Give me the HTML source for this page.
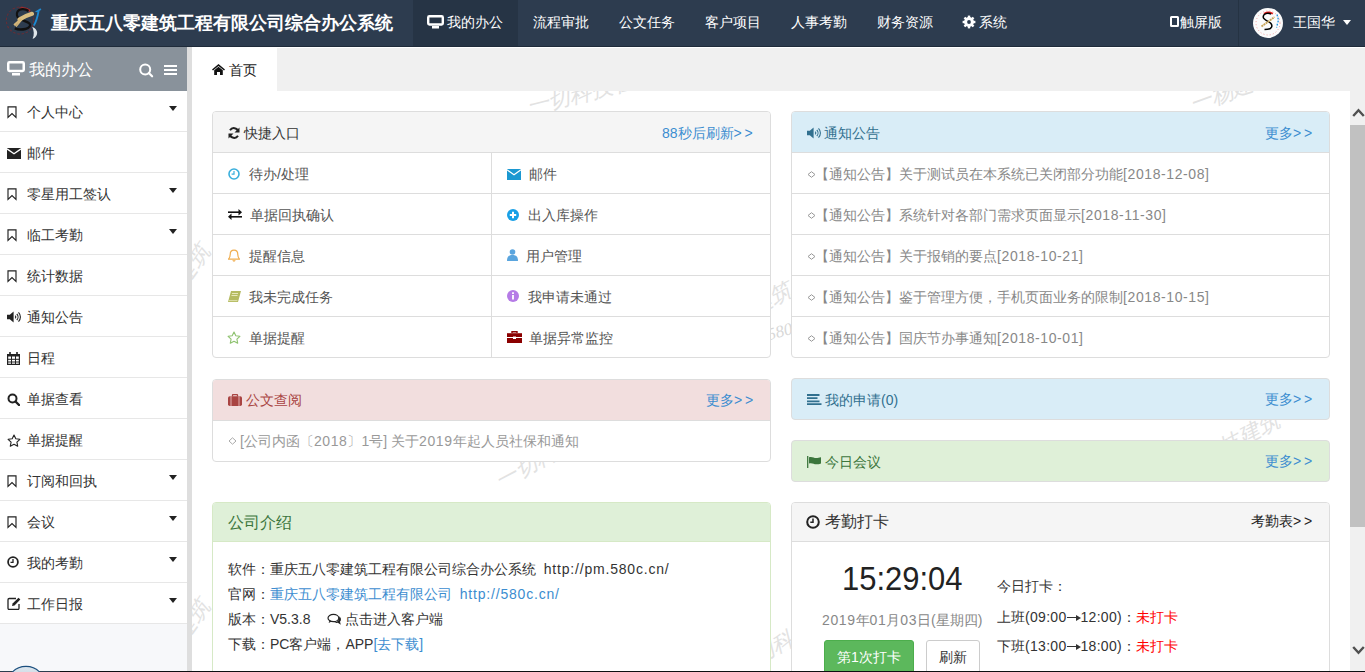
<!DOCTYPE html>
<html><head><meta charset="utf-8">
<style>
*{box-sizing:border-box;margin:0;padding:0}
html,body{width:1365px;height:672px;overflow:hidden;background:#fff;font-family:"Liberation Sans",sans-serif;font-size:14px;color:#333}
.a{position:absolute;white-space:nowrap}
svg{position:absolute;display:block}
.box{position:absolute;box-sizing:border-box}
.pn{position:absolute;border:1px solid #ddd;border-radius:4px;background:#fff;overflow:hidden}
.hl{position:absolute;height:1px;background:#ddd}
.vl{position:absolute;width:1px;background:#ddd}
.t14{font-size:14px;line-height:20px}
.g{color:#555}
.lk{color:#3c8dd0}
.n{letter-spacing:.6px}
.arr{display:inline-block;position:relative;width:14px;height:10px}
.arr i{position:absolute;left:0;top:5px;width:12px;height:1px;background:#333}
.arr b{position:absolute;left:9px;top:2.5px;width:0;height:0;border-top:3px solid transparent;border-bottom:3px solid transparent;border-left:5px solid #333}
</style></head>
<body>
<!-- top nav -->
<div class="box" style="left:0;top:0;width:1365px;height:47px;background:#2d3c4f"></div>
<div class="box" style="left:0;top:46px;width:1365px;height:1px;background:#1f2b3a"></div>
<!-- logo -->
<svg style="left:0;top:0" width="46" height="46" viewBox="0 0 46 46">
  <circle cx="20" cy="20.5" r="13.6" fill="none" stroke="#8e2424" stroke-width="1.1" stroke-dasharray="2.5 1.8" opacity=".6"/>
  <path d="M19.5 8.8C23 8 27 8.6 30 10.8" fill="none" stroke="#c42a2a" stroke-width="2.2"/>
  <path d="M28.5 11C25.5 8.5 19.5 8.5 17.6 11.5 16.2 14 17 17 19 18.5 22 20.5 27 21 29.5 23.5 31 25.5 29.5 28.2 25.5 29 21.5 29.8 17.5 29.5 14.8 28.4" fill="none" stroke="#111" stroke-width="2.3"/>
  <path d="M32 13.8C28 15 23 17 19.5 19.5" fill="none" stroke="#d9bd80" stroke-width="4.2" stroke-linecap="round"/>
  <path d="M20.5 19L14.2 24.4M21.5 20L16.5 26.2M19.5 20.5L15 25.5" stroke="#d2b478" stroke-width="1.3" stroke-linecap="round"/>
  <path d="M40.9 9L37.3 11.3 38.5 11.5C37.5 17 36 22 33.8 25.6" fill="none" stroke="#1e8ad2" stroke-width="1.8"/>
  <path d="M32.2 26.8C36 28.5 38.5 32 36.5 35.5 35.5 37.5 34 38.5 32.6 38.7 34.5 35 34 30.5 32.2 26.8z" fill="#dfe6ea"/>
</svg>
<div class="a" style="left:51px;top:11px;font-size:18px;font-weight:bold;color:#fff;line-height:24px">重庆五八零建筑工程有限公司综合办公系统</div>
<!-- nav items -->
<div class="box" style="left:413px;top:0;width:105px;height:46px;background:#263445"></div>
<svg style="left:427px;top:15px" width="17" height="14" viewBox="0 0 17 14"><rect x="1.2" y="1.2" width="14.6" height="8.3" rx="1.2" fill="none" stroke="#fff" stroke-width="2.4"/><path d="M5 11h7v2.5H5z" fill="#fff"/></svg>
<div class="a t14" style="left:447px;top:12px;color:#fff">我的办公</div>
<div class="a t14" style="left:533px;top:12px;color:#fff">流程审批</div>
<div class="a t14" style="left:619px;top:12px;color:#fff">公文任务</div>
<div class="a t14" style="left:705px;top:12px;color:#fff">客户项目</div>
<div class="a t14" style="left:791px;top:12px;color:#fff">人事考勤</div>
<div class="a t14" style="left:877px;top:12px;color:#fff">财务资源</div>
<svg style="left:962px;top:15px" width="14" height="14" viewBox="0 0 14 14"><g fill="#fff"><circle cx="7" cy="7" r="4.9"/><rect x="5.8" y="0.6" width="2.4" height="3" transform="rotate(0 7 7)"/><rect x="5.8" y="0.6" width="2.4" height="3" transform="rotate(45 7 7)"/><rect x="5.8" y="0.6" width="2.4" height="3" transform="rotate(90 7 7)"/><rect x="5.8" y="0.6" width="2.4" height="3" transform="rotate(135 7 7)"/><rect x="5.8" y="0.6" width="2.4" height="3" transform="rotate(180 7 7)"/><rect x="5.8" y="0.6" width="2.4" height="3" transform="rotate(225 7 7)"/><rect x="5.8" y="0.6" width="2.4" height="3" transform="rotate(270 7 7)"/><rect x="5.8" y="0.6" width="2.4" height="3" transform="rotate(315 7 7)"/></g><circle cx="7" cy="7" r="1.9" fill="#2d3c4f"/></svg>
<div class="a t14" style="left:979px;top:12px;color:#fff">系统</div>
<div class="box" style="left:1170px;top:16px;width:9px;height:11px;border:2px solid #fff;border-radius:1.5px"></div>
<div class="a t14" style="left:1180px;top:12px;color:#fff">触屏版</div>
<div class="box" style="left:1238px;top:0;width:1px;height:46px;background:#253343"></div>
<svg style="left:1253px;top:8px" width="30" height="30" viewBox="0 0 30 30">
  <circle cx="15" cy="15" r="15" fill="#fbfbfb"/>
  <circle cx="15" cy="15" r="12" fill="none" stroke="#e66" stroke-width=".9" stroke-dasharray="1 2.2" opacity=".7"/>
  <path d="M11 5.8C13 4.2 17 3.8 19.8 5.8" fill="none" stroke="#e01818" stroke-width="1.7"/>
  <path d="M18 6.2C15 4.5 10.2 5.5 10.2 9 10.3 12 15.5 13 17.5 15 20 17.5 19 21 14.5 21.3L11.5 21.5" fill="none" stroke="#000" stroke-width="1.5"/>
  <path d="M8.5 18.5L21.5 9" stroke="#c8a458" stroke-width="1.9" stroke-dasharray="2 .6"/>
  <path d="M24 6.5L25.5 12 23.5 19.5" fill="none" stroke="#1c8fe0" stroke-width="1.3" stroke-dasharray="1.8 1.4"/>
</svg>
<div class="a t14" style="left:1293px;top:12px;color:#fff">王国华</div>
<div class="box" style="left:1343px;top:20px;width:0;height:0;border-left:4.5px solid transparent;border-right:4.5px solid transparent;border-top:5px solid #fff"></div>

<!-- sidebar -->
<div class="box" style="left:0;top:47px;width:187px;height:625px;background:#f7f8fa"></div>
<div class="box" style="left:0;top:47px;width:187px;height:44px;background:#89929b"></div>
<svg style="left:7px;top:61px" width="18" height="15" viewBox="0 0 18 15"><rect x="1.25" y="1.25" width="15.5" height="8.8" rx="1.2" fill="none" stroke="#fff" stroke-width="2.5"/><path d="M5 12h8v2.5H5z" fill="#fff"/></svg>
<div class="a" style="left:29px;top:59px;font-size:16px;line-height:22px;color:#fff">我的办公</div>
<svg style="left:139px;top:63px" width="16" height="16" viewBox="0 0 16 16"><circle cx="6.2" cy="6.4" r="5" fill="none" stroke="#fff" stroke-width="2"/><path d="M9.8 10l3.3 3.3" stroke="#fff" stroke-width="2.2" stroke-linecap="round"/></svg>
<svg style="left:164px;top:65px" width="13" height="11" viewBox="0 0 13 11"><path d="M0 1h13M0 5h13M0 9h13" stroke="#fff" stroke-width="2.1"/></svg>
<div class="box" style="left:0;top:91px;width:187px;height:41px;background:#fff;border-bottom:1px solid #e7e7e7"></div>
<svg style="left:7px;top:106px" width="10" height="13" viewBox="0 0 10 13"><path d="M1 .8h8v10.6L5 7.6 1 11.4z" fill="none" stroke="#222" stroke-width="1.15" stroke-linejoin="miter"/></svg>
<div class="a t14" style="left:27px;top:102px;color:#333">个人中心</div>
<div class="box" style="left:169px;top:106px;width:0;height:0;border-left:4px solid transparent;border-right:4px solid transparent;border-top:5px solid #222"></div>
<div class="box" style="left:0;top:132px;width:187px;height:41px;background:#fff;border-bottom:1px solid #e7e7e7"></div>
<svg style="left:7px;top:148px" width="14" height="11" viewBox="0 0 14 11"><path d="M0 0h14v11H0z" fill="#222"/><path d="M0 .9l7 4.8 7-4.8" fill="none" stroke="#fff" stroke-width="1.3"/></svg>
<div class="a t14" style="left:27px;top:143px;color:#333">邮件</div>
<div class="box" style="left:0;top:173px;width:187px;height:41px;background:#fff;border-bottom:1px solid #e7e7e7"></div>
<svg style="left:7px;top:188px" width="10" height="13" viewBox="0 0 10 13"><path d="M1 .8h8v10.6L5 7.6 1 11.4z" fill="none" stroke="#222" stroke-width="1.15" stroke-linejoin="miter"/></svg>
<div class="a t14" style="left:27px;top:184px;color:#333">零星用工签认</div>
<div class="box" style="left:169px;top:188px;width:0;height:0;border-left:4px solid transparent;border-right:4px solid transparent;border-top:5px solid #222"></div>
<div class="box" style="left:0;top:214px;width:187px;height:41px;background:#fff;border-bottom:1px solid #e7e7e7"></div>
<svg style="left:7px;top:229px" width="10" height="13" viewBox="0 0 10 13"><path d="M1 .8h8v10.6L5 7.6 1 11.4z" fill="none" stroke="#222" stroke-width="1.15" stroke-linejoin="miter"/></svg>
<div class="a t14" style="left:27px;top:225px;color:#333">临工考勤</div>
<div class="box" style="left:169px;top:229px;width:0;height:0;border-left:4px solid transparent;border-right:4px solid transparent;border-top:5px solid #222"></div>
<div class="box" style="left:0;top:255px;width:187px;height:41px;background:#fff;border-bottom:1px solid #e7e7e7"></div>
<svg style="left:7px;top:270px" width="10" height="13" viewBox="0 0 10 13"><path d="M1 .8h8v10.6L5 7.6 1 11.4z" fill="none" stroke="#222" stroke-width="1.15" stroke-linejoin="miter"/></svg>
<div class="a t14" style="left:27px;top:266px;color:#333">统计数据</div>
<div class="box" style="left:0;top:296px;width:187px;height:41px;background:#fff;border-bottom:1px solid #e7e7e7"></div>
<svg style="left:7px;top:311px" width="15" height="12" viewBox="0 0 15 12"><path d="M0 3.8h2.8L6.6 .4v11.2L2.8 8.2H0z" fill="#222"/><path d="M8.2 4.6a2 2 0 0 1 0 2.8M9.8 3a4.3 4.3 0 0 1 0 6M11.5 1.4a6.5 6.5 0 0 1 0 9.2" fill="none" stroke="#222" stroke-width="1.1"/></svg>
<div class="a t14" style="left:27px;top:307px;color:#333">通知公告</div>
<div class="box" style="left:0;top:337px;width:187px;height:41px;background:#fff;border-bottom:1px solid #e7e7e7"></div>
<svg style="left:7px;top:352px" width="13" height="13" viewBox="0 0 13 13"><path d="M0.6 2.6h11.8v9.8H0.6z" fill="none" stroke="#222" stroke-width="1.2"/><path d="M0 2h13v2.5H0z" fill="#222"/><path d="M3 0v3M10 0v3" stroke="#222" stroke-width="1.6"/><path d="M4.5 4v9M8.5 4v9M0 7.3h13M0 10h13" stroke="#222" stroke-width="1"/></svg>
<div class="a t14" style="left:27px;top:348px;color:#333">日程</div>
<div class="box" style="left:0;top:378px;width:187px;height:41px;background:#fff;border-bottom:1px solid #e7e7e7"></div>
<svg style="left:7px;top:393px" width="13" height="13" viewBox="0 0 13 13"><circle cx="5.5" cy="5.5" r="4" fill="none" stroke="#222" stroke-width="2"/><path d="M8.5 8.5l3.5 3.5" stroke="#222" stroke-width="2.4" stroke-linecap="round"/></svg>
<div class="a t14" style="left:27px;top:389px;color:#333">单据查看</div>
<div class="box" style="left:0;top:419px;width:187px;height:41px;background:#fff;border-bottom:1px solid #e7e7e7"></div>
<svg style="left:7px;top:434px" width="14" height="13" viewBox="0 0 14 13"><path d="M7 1l1.8 3.8 4.1.5-3 2.8.8 4.1L7 10.2l-3.7 2 .8-4.1-3-2.8 4.1-.5z" fill="none" stroke="#222" stroke-width="1.1" stroke-linejoin="round"/></svg>
<div class="a t14" style="left:27px;top:430px;color:#333">单据提醒</div>
<div class="box" style="left:0;top:460px;width:187px;height:41px;background:#fff;border-bottom:1px solid #e7e7e7"></div>
<svg style="left:7px;top:475px" width="10" height="13" viewBox="0 0 10 13"><path d="M1 .8h8v10.6L5 7.6 1 11.4z" fill="none" stroke="#222" stroke-width="1.15" stroke-linejoin="miter"/></svg>
<div class="a t14" style="left:27px;top:471px;color:#333">订阅和回执</div>
<div class="box" style="left:169px;top:475px;width:0;height:0;border-left:4px solid transparent;border-right:4px solid transparent;border-top:5px solid #222"></div>
<div class="box" style="left:0;top:501px;width:187px;height:41px;background:#fff;border-bottom:1px solid #e7e7e7"></div>
<svg style="left:7px;top:516px" width="10" height="13" viewBox="0 0 10 13"><path d="M1 .8h8v10.6L5 7.6 1 11.4z" fill="none" stroke="#222" stroke-width="1.15" stroke-linejoin="miter"/></svg>
<div class="a t14" style="left:27px;top:512px;color:#333">会议</div>
<div class="box" style="left:169px;top:516px;width:0;height:0;border-left:4px solid transparent;border-right:4px solid transparent;border-top:5px solid #222"></div>
<div class="box" style="left:0;top:542px;width:187px;height:41px;background:#fff;border-bottom:1px solid #e7e7e7"></div>
<svg style="left:7px;top:556px" width="12" height="12" viewBox="0 0 12 12"><circle cx="6" cy="6" r="4.9" fill="none" stroke="#222" stroke-width="1.8"/><path d="M6 3v3.3H3.5" fill="none" stroke="#222" stroke-width="1.3"/></svg>
<div class="a t14" style="left:27px;top:553px;color:#333">我的考勤</div>
<div class="box" style="left:169px;top:557px;width:0;height:0;border-left:4px solid transparent;border-right:4px solid transparent;border-top:5px solid #222"></div>
<div class="box" style="left:0;top:583px;width:187px;height:41px;background:#fff;border-bottom:1px solid #e7e7e7"></div>
<svg style="left:7px;top:597px" width="14" height="13" viewBox="0 0 14 13"><path d="M9 1.5H2.2A1.2 1.2 0 0 0 1 2.7v8.6a1.2 1.2 0 0 0 1.2 1.2h8.6a1.2 1.2 0 0 0 1.2-1.2V7" fill="none" stroke="#222" stroke-width="1.3"/><path d="M5 9l.6-2.5L11.5.8l1.8 1.8-5.8 5.8z" fill="#222"/></svg>
<div class="a t14" style="left:27px;top:594px;color:#333">工作日报</div>
<div class="box" style="left:169px;top:598px;width:0;height:0;border-left:4px solid transparent;border-right:4px solid transparent;border-top:5px solid #222"></div>
<!-- divider, tabs -->
<div class="box" style="left:187px;top:47px;width:5px;height:625px;background:#dedede"></div>
<div class="box" style="left:192px;top:47px;width:1173px;height:44px;background:#f0f0f0"></div>
<div class="box" style="left:192px;top:47px;width:1173px;height:1px;background:#fff"></div>
<div class="box" style="left:192px;top:47px;width:85px;height:44px;background:#fff"></div>
<svg style="left:212px;top:64px" width="13" height="11" viewBox="0 0 13 11"><path d="M6.5 0L0 5.5l1 1 5.5-4.6L12 6.5l1-1z" fill="#111"/><path d="M2.2 6.3L6.5 2.7l4.3 3.6V11H8V8H5v3H2.2z" fill="#111"/></svg>
<div class="a t14" style="left:229px;top:60px;color:#222">首页</div>
<!-- content -->
<div class="box" style="left:192px;top:91px;width:1158px;height:581px;background:#fff"></div>
<!-- watermark -->
<div class="box" style="left:192px;top:91px;width:1158px;height:581px;overflow:hidden">
<div class="a" style="left:311px;top:377px;font-family:'Liberation Serif',serif;font-style:italic;font-size:22px;line-height:26px;color:#e2e2e2;transform-origin:0 100%;transform:rotate(-28deg)">一切科技建筑</div>
<div class="a" style="left:976px;top:375px;font-family:'Liberation Serif',serif;font-style:italic;font-size:22px;line-height:26px;color:#e2e2e2;transform-origin:0 100%;transform:rotate(-28deg)">一切科技建筑</div>
<div class="a" style="left:1003px;top:1px;font-family:'Liberation Serif',serif;font-style:italic;font-size:22px;line-height:26px;color:#e2e2e2;transform-origin:0 100%;transform:rotate(-20deg)">一杨建筑师</div>
<div class="a" style="left:488px;top:245px;font-family:'Liberation Serif',serif;font-style:italic;font-size:22px;line-height:26px;color:#e2e2e2;transform-origin:0 100%;transform:rotate(-28deg)">一切科技建筑</div>
<div class="a" style="left:-2px;top:528px;font-family:'Liberation Serif',serif;font-style:italic;font-size:22px;line-height:26px;color:#e2e2e2;transform-origin:0 100%;transform:rotate(-55deg)">建筑</div>
<div class="a" style="left:338px;top:3px;font-family:'Liberation Serif',serif;font-style:italic;font-size:22px;line-height:26px;color:#e2e2e2;transform-origin:0 100%;transform:rotate(-14deg)">一切科技在此</div>
<div class="a" style="left:-2px;top:173px;font-family:'Liberation Serif',serif;font-style:italic;font-size:22px;line-height:26px;color:#e2e2e2;transform-origin:0 100%;transform:rotate(-55deg)">建筑</div>
<div class="a" style="left:548px;top:563px;font-family:'Liberation Serif',serif;font-style:italic;font-size:22px;line-height:26px;color:#e2e2e2;transform-origin:0 100%;transform:rotate(-28deg)">一切科技建筑</div>
<div class="a" style="left:578px;top:234px;font-family:'Liberation Serif',serif;font-style:italic;font-size:17px;line-height:20px;color:#d8d8d8;transform:rotate(-15deg);transform-origin:0 100%">580c</div>
</div>
<!-- panel 快捷入口 -->
<div class="pn" style="left:212px;top:111px;width:559px;height:247px;background:#fff">
  <div class="box" style="left:0;top:0;width:557px;height:40px;background:#f5f5f5"></div>
</div>
<div class="hl" style="left:213px;top:152px;width:557px"></div>
<div class="hl" style="left:213px;top:193px;width:557px"></div>
<div class="hl" style="left:213px;top:234px;width:557px"></div>
<div class="hl" style="left:213px;top:275px;width:557px"></div>
<div class="hl" style="left:213px;top:316px;width:557px"></div>
<div class="vl" style="left:491px;top:153px;height:204px"></div>
<svg style="left:228px;top:127px" width="12" height="12" viewBox="0 0 12 12"><path d="M10.3 4.5A4.6 4.6 0 0 0 2 3.2" fill="none" stroke="#222" stroke-width="2"/><path d="M11.5 0.5v5h-5z" fill="#222"/><path d="M1.7 7.5A4.6 4.6 0 0 0 10 8.8" fill="none" stroke="#222" stroke-width="2"/><path d="M0.5 11.5v-5h5z" fill="#222"/></svg>
<div class="a t14" style="left:244px;top:123px;color:#333">快捷入口</div>
<div class="a t14 lk" style="left:662px;top:123px">88秒后刷新&gt;&thinsp;&gt;</div>
<!-- left column icons -->
<svg style="left:228px;top:168px" width="12" height="12" viewBox="0 0 12 12"><circle cx="6" cy="6" r="5" fill="none" stroke="#3aafdc" stroke-width="1.6"/><path d="M6 3v3.2H3.6" fill="none" stroke="#3aafdc" stroke-width="1.2"/></svg>
<div class="a t14 g" style="left:249px;top:164px">待办/处理</div>
<svg style="left:228px;top:209px" width="14" height="11" viewBox="0 0 14 11"><path d="M0 3.2h11" stroke="#111" stroke-width="1.6"/><path d="M14 3.2L10.5 0v6.4z" fill="#111"/><path d="M3 7.8h11" stroke="#111" stroke-width="1.6"/><path d="M0 7.8l3.5-3.2v6.4z" fill="#111"/></svg>
<div class="a t14 g" style="left:250px;top:205px">单据回执确认</div>
<svg style="left:228px;top:249px" width="12" height="13" viewBox="0 0 12 13"><path d="M6 1.2c-2.4 0-3.8 1.8-3.8 4.2 0 2.8-1.2 4.2-1.7 4.8h11c-.5-.6-1.7-2-1.7-4.8C9.8 3 8.4 1.2 6 1.2z" fill="none" stroke="#f0ad4e" stroke-width="1.2"/><path d="M4.8 11.3a1.3 1.3 0 0 0 2.4 0" fill="none" stroke="#f0ad4e" stroke-width="1.1"/></svg>
<div class="a t14 g" style="left:249px;top:246px">提醒信息</div>
<svg style="left:228px;top:291px" width="13" height="11" viewBox="0 0 13 11"><path d="M3 0h10L10 11H0z" fill="#b5bb62"/><path d="M4 2.5h6M3.5 4.5h6" stroke="#f4f4d0" stroke-width=".8"/><path d="M0.8 9.6h8.6" stroke="#e8eac0" stroke-width=".8"/></svg>
<div class="a t14 g" style="left:249px;top:287px">我未完成任务</div>
<svg style="left:227px;top:331px" width="14" height="13" viewBox="0 0 14 13"><path d="M7 1l1.8 3.8 4.1.5-3 2.8.8 4.1L7 10.2l-3.7 2 .8-4.1-3-2.8 4.1-.5z" fill="none" stroke="#8ec26f" stroke-width="1.1" stroke-linejoin="round"/></svg>
<div class="a t14 g" style="left:249px;top:328px">单据提醒</div>
<!-- right column icons -->
<svg style="left:507px;top:169px" width="14" height="11" viewBox="0 0 14 11"><path d="M0 0h14v11H0z" fill="#1b98d1"/><path d="M0 .8l7 5 7-5" fill="none" stroke="#fff" stroke-width="1.2"/></svg>
<div class="a t14 g" style="left:529px;top:164px">邮件</div>
<svg style="left:507px;top:209px" width="12" height="12" viewBox="0 0 12 12"><circle cx="6" cy="6" r="6" fill="#19a0e6"/><path d="M6 2.8v6.4M2.8 6h6.4" stroke="#fff" stroke-width="2"/></svg>
<div class="a t14 g" style="left:528px;top:205px">出入库操作</div>
<svg style="left:507px;top:249px" width="11" height="12" viewBox="0 0 11 12"><circle cx="5.5" cy="3" r="2.8" fill="#5aa5de"/><path d="M0 12c0-4 1.5-6 5.5-6S11 8 11 12z" fill="#5aa5de"/></svg>
<div class="a t14 g" style="left:526px;top:246px">用户管理</div>
<svg style="left:507px;top:290px" width="12" height="12" viewBox="0 0 12 12"><circle cx="6" cy="6" r="6" fill="#b57be6"/><path d="M6 2.3v1.6M6 5v4.5" stroke="#fff" stroke-width="1.8"/></svg>
<div class="a t14 g" style="left:528px;top:287px">我申请未通过</div>
<svg style="left:507px;top:331px" width="15" height="12" viewBox="0 0 15 12"><path d="M5 2V.8h5V2" fill="none" stroke="#8b0000" stroke-width="1.4"/><path d="M0 2.2h15v9.8H0z" fill="#8b0000"/><path d="M0 6.5h15" stroke="#fff" stroke-width="1"/><path d="M6 5.5h3v2.5H6z" fill="#fff"/></svg>
<div class="a t14 g" style="left:529px;top:328px">单据异常监控</div>

<!-- panel 通知公告 -->
<div class="pn" style="left:791px;top:111px;width:539px;height:247px">
  <div class="box" style="left:0;top:0;width:537px;height:40px;background:#d9edf7"></div>
</div>
<div class="hl" style="left:792px;top:152px;width:537px"></div>
<div class="hl" style="left:792px;top:193px;width:537px"></div>
<div class="hl" style="left:792px;top:234px;width:537px"></div>
<div class="hl" style="left:792px;top:275px;width:537px"></div>
<div class="hl" style="left:792px;top:316px;width:537px"></div>
<svg style="left:807px;top:127px" width="15" height="12" viewBox="0 0 15 12"><path d="M0 3.8h2.8L6.6 .4v11.2L2.8 8.2H0z" fill="#31708f"/><path d="M8.2 4.6a2 2 0 0 1 0 2.8M9.8 3a4.3 4.3 0 0 1 0 6M11.5 1.4a6.5 6.5 0 0 1 0 9.2" fill="none" stroke="#31708f" stroke-width="1.1"/></svg>
<div class="a t14" style="left:824px;top:123px;color:#31708f">通知公告</div>
<div class="a t14 lk" style="left:1265px;top:123px">更多&gt;&thinsp;&gt;</div>
<svg style="left:807px;top:171px" width="9" height="7" viewBox="0 0 9 7"><path d="M4.5 .7L8 3.5 4.5 6.3 1 3.5z" fill="none" stroke="#999" stroke-width="1"/></svg><div class="a t14" style="left:815px;top:164px;color:#888">【通知公告】关于测试员在本系统已关闭部分功能<span class="n">[2018-12-08]</span></div>
<svg style="left:807px;top:212px" width="9" height="7" viewBox="0 0 9 7"><path d="M4.5 .7L8 3.5 4.5 6.3 1 3.5z" fill="none" stroke="#999" stroke-width="1"/></svg><div class="a t14" style="left:815px;top:205px;color:#888">【通知公告】系统针对各部门需求页面显示<span class="n">[2018-11-30]</span></div>
<svg style="left:807px;top:253px" width="9" height="7" viewBox="0 0 9 7"><path d="M4.5 .7L8 3.5 4.5 6.3 1 3.5z" fill="none" stroke="#999" stroke-width="1"/></svg><div class="a t14" style="left:815px;top:246px;color:#888">【通知公告】关于报销的要点<span class="n">[2018-10-21]</span></div>
<svg style="left:807px;top:294px" width="9" height="7" viewBox="0 0 9 7"><path d="M4.5 .7L8 3.5 4.5 6.3 1 3.5z" fill="none" stroke="#999" stroke-width="1"/></svg><div class="a t14" style="left:815px;top:287px;color:#888">【通知公告】鉴于管理方便，手机页面业务的限制<span class="n">[2018-10-15]</span></div>
<svg style="left:807px;top:335px" width="9" height="7" viewBox="0 0 9 7"><path d="M4.5 .7L8 3.5 4.5 6.3 1 3.5z" fill="none" stroke="#999" stroke-width="1"/></svg><div class="a t14" style="left:815px;top:328px;color:#888">【通知公告】国庆节办事通知<span class="n">[2018-10-01]</span></div>

<!-- panel 公文查阅 -->
<div class="pn" style="left:212px;top:379px;width:559px;height:83px">
  <div class="box" style="left:0;top:0;width:557px;height:40px;background:#f2dede"></div>
</div>
<div class="hl" style="left:213px;top:420px;width:557px"></div>
<svg style="left:228px;top:394px" width="14" height="12" viewBox="0 0 14 12"><path d="M4.5 2.5V1.2a.6.6 0 0 1 .6-.6h3.8a.6.6 0 0 1 .6.6V2.5" fill="none" stroke="#a94442" stroke-width="1.3"/><rect x="0" y="2.2" width="14" height="9.8" rx="1.8" fill="#a94442"/><path d="M3 2.2v9.8M11 2.2v9.8" stroke="#e8c0c0" stroke-width=".9"/></svg>
<div class="a t14" style="left:246px;top:390px;color:#a94442">公文查阅</div>
<div class="a t14 lk" style="left:706px;top:390px">更多&gt;&thinsp;&gt;</div>
<svg style="left:228px;top:437px" width="9" height="8" viewBox="0 0 9 8"><path d="M4.5 .8L8 4 4.5 7.2 1 4z" fill="none" stroke="#aaa" stroke-width="1"/></svg><div class="a t14" style="left:240px;top:431px;color:#999">[公司内函〔<span class="n">2018</span>〕1号] 关于<span class="n">2019</span>年起人员社保和通知</div>

<!-- panel 我的申请 -->
<div class="pn" style="left:791px;top:378px;width:539px;height:42px;background:#d9edf7"></div>
<svg style="left:807px;top:394px" width="15" height="11" viewBox="0 0 15 11"><path d="M0 1h12.5M0 4.2h10.5M0 7.4h12.5M0 10.2h14.5" stroke="#31708f" stroke-width="1.8"/></svg>
<div class="a t14" style="left:825px;top:390px;color:#31708f">我的申请(0)</div>
<div class="a t14 lk" style="left:1265px;top:389px">更多&gt;&thinsp;&gt;</div>

<!-- panel 今日会议 -->
<div class="pn" style="left:791px;top:440px;width:539px;height:42px;background:#dff0d8"></div>
<svg style="left:807px;top:456px" width="15" height="12" viewBox="0 0 15 12"><path d="M.7 0v12" stroke="#3c763d" stroke-width="1.3"/><path d="M2 1.2c3-1 5 .8 7 .8s3-.8 5-.8v6.3c-2 .8-3 .8-5 .8S5 6.5 2 7.5z" fill="#3c763d"/></svg>
<div class="a t14" style="left:825px;top:452px;color:#3c763d">今日会议</div>
<div class="a t14 lk" style="left:1265px;top:451px">更多&gt;&thinsp;&gt;</div>

<!-- panel 公司介绍 -->
<div class="pn" style="left:212px;top:502px;width:559px;height:200px;border-color:#d6e9c6">
  <div class="box" style="left:0;top:0;width:557px;height:39px;background:#dff0d8;border-bottom:1px solid #d6e9c6"></div>
</div>
<div class="a" style="left:228px;top:512px;font-size:16px;line-height:22px;color:#3c763d">公司介绍</div>
<div class="a t14" style="left:228px;top:559px;color:#333">软件：重庆五八零建筑工程有限公司综合办公系统&nbsp; <span style="letter-spacing:.8px">http://pm.580c.cn/</span></div>
<div class="a t14" style="left:228px;top:584px;color:#333">官网：<span class="lk">重庆五八零建筑工程有限公司&nbsp; <span style="letter-spacing:.8px">http://580c.cn/</span></span></div>
<div class="a t14" style="left:228px;top:609px;color:#333">版本：V5.3.8</div>
<svg style="left:327px;top:613px" width="16" height="13" viewBox="0 0 16 13"><path d="M12.2 3.2C14.2 4.5 14.6 7 13 8.8L13.8 11.8 10.8 9.8C9.5 10.2 8 10.2 6.8 9.8 9.8 9.5 12.6 7.5 12.2 3.2z" fill="#222"/><ellipse cx="6.4" cy="5" rx="5.4" ry="3.7" fill="#fff" stroke="#222" stroke-width="1.2"/><path d="M2.6 7.6L1.6 10 4.6 8.5z" fill="#222"/></svg>
<div class="a t14" style="left:345px;top:609px;color:#333">点击进入客户端</div>
<div class="a t14" style="left:228px;top:634px;color:#333">下载：PC客户端，APP<span class="lk">[去下载]</span></div>

<!-- panel 考勤打卡 -->
<div class="pn" style="left:791px;top:502px;width:539px;height:200px">
  <div class="box" style="left:0;top:0;width:537px;height:39px;background:#f5f5f5;border-bottom:1px solid #ddd"></div>
</div>
<svg style="left:806px;top:515px" width="14" height="14" viewBox="0 0 14 14"><circle cx="7" cy="7" r="5.8" fill="none" stroke="#222" stroke-width="2"/><path d="M7 3.5v3.8H4.3" fill="none" stroke="#222" stroke-width="1.5"/></svg>
<div class="a" style="left:825px;top:511px;font-size:16px;line-height:22px;color:#333">考勤打卡</div>
<div class="a t14" style="left:1251px;top:511px;color:#222">考勤表&gt;&thinsp;&gt;</div>
<div class="a" style="left:842px;top:558px;font-size:34px;line-height:40px;color:#222;transform:scaleX(.91);transform-origin:0 0">15:29:04</div>
<div class="a t14" style="left:822px;top:610px;color:#888"><span class="n">2019</span>年<span class="n">01</span>月<span class="n">03</span>日(星期四)</div>
<div class="box" style="left:824px;top:640px;width:90px;height:36px;background:#5cb85c;border-radius:3px;border:1px solid #4cae4c"></div>
<div class="a t14" style="left:837px;top:647px;color:#fff">第1次打卡</div>
<div class="box" style="left:926px;top:640px;width:54px;height:36px;background:#fff;border-radius:3px;border:1px solid #ccc"></div>
<div class="a t14" style="left:939px;top:647px;color:#333">刷新</div>
<div class="a t14" style="left:997px;top:576px;color:#333">今日打卡：</div>
<div class="a t14" style="left:997px;top:607px;color:#333">上班<span style="letter-spacing:.3px">(09:00<span class="arr"><i></i><b></b></span>12:00)</span>：<span style="color:#f00">未打卡</span></div>
<div class="a t14" style="left:997px;top:636px;color:#333">下班<span style="letter-spacing:.3px">(13:00<span class="arr"><i></i><b></b></span>18:00)</span>：<span style="color:#f00">未打卡</span></div>
<!-- scrollbar -->
<div class="box" style="left:1350px;top:91px;width:15px;height:581px;background:#f0f0f0"></div>
<div class="box" style="left:1350px;top:125px;width:15px;height:402px;background:#c1c1c1"></div>
<svg style="left:1352px;top:107px" width="13" height="11" viewBox="0 0 13 11"><path d="M1.2 9l5.3-5.8L11.8 9" fill="none" stroke="#505050" stroke-width="2.4"/></svg>
<svg style="left:1352px;top:645px" width="13" height="11" viewBox="0 0 13 11"><path d="M1.2 2l5.3 5.8L11.8 2" fill="none" stroke="#505050" stroke-width="2.4"/></svg>
<!-- bottom dark line -->
<div class="box" style="left:0;top:671px;width:1365px;height:1px;background:#0d0f12"></div>
<div class="box" style="left:0;top:671px;width:60px;height:1px;background:#2c3d4e"></div>
<svg style="left:6px;top:664px" width="40" height="8" viewBox="0 0 40 8"><defs><linearGradient id="og" x1="0" y1="0" x2="0" y2="1"><stop offset="0" stop-color="#dfe8ef"/><stop offset="1" stop-color="#8fa9bf"/></linearGradient></defs><circle cx="20" cy="21.8" r="19.4" fill="url(#og)" stroke="#1b4f7e" stroke-width="1.1"/></svg>
</body></html>
